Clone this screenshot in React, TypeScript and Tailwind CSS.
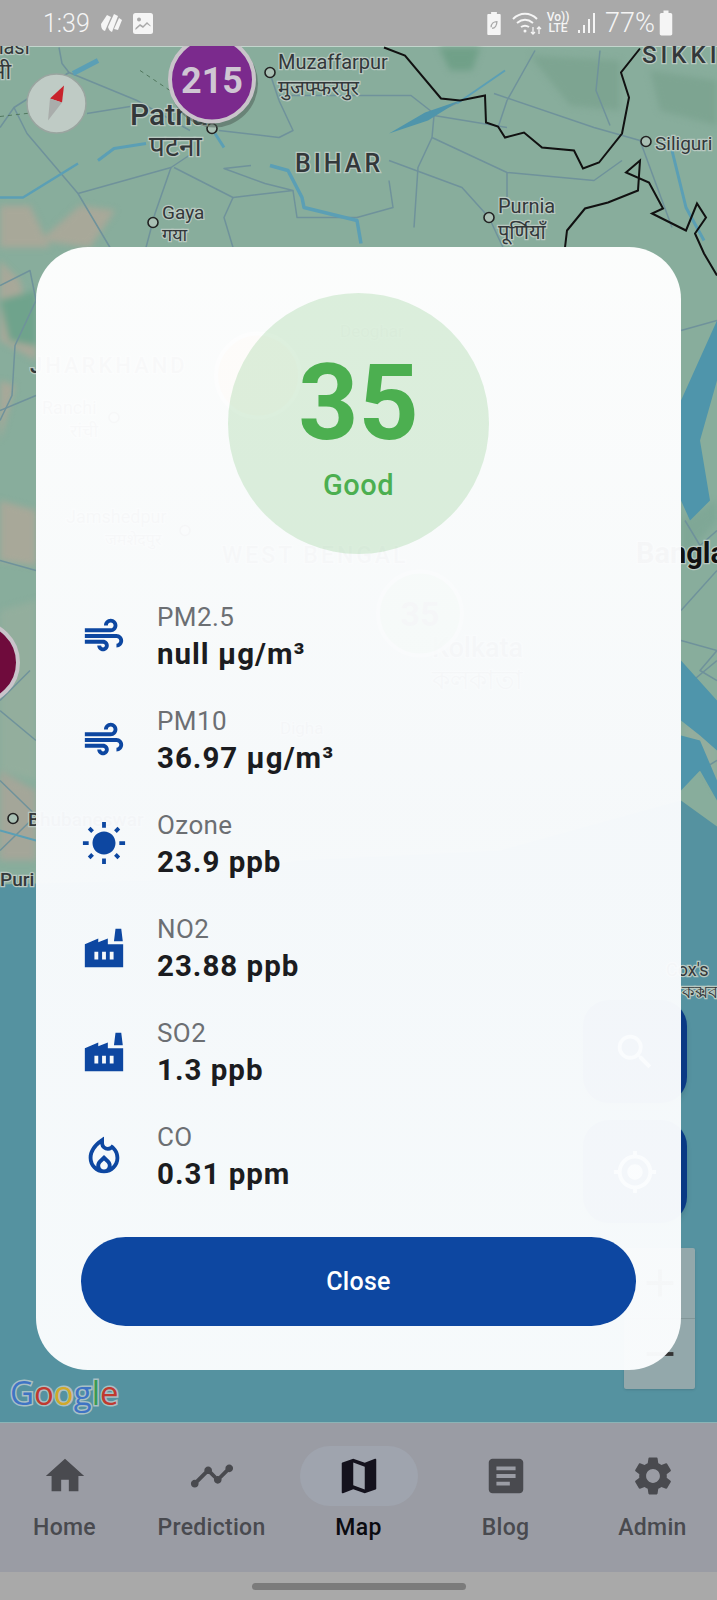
import { ReactNode } from "react";
import {
  MdAir,
  MdWbSunny,
  MdFactory,
  MdOutlineLocalFireDepartment,
  MdHome,
  MdTimeline,
  MdMap,
  MdArticle,
  MdSettings,
  MdSearch,
  MdGpsFixed,
  MdBatteryStd,
  MdAdd,
  MdRemove,
} from "react-icons/md";

const pollutants: { icon: ReactNode; label: string; value: string }[] = [
  { icon: <MdAir size={46} />, label: "PM2.5", value: "null µg/m³" },
  { icon: <MdAir size={46} />, label: "PM10", value: "36.97 µg/m³" },
  { icon: <MdWbSunny size={46} />, label: "Ozone", value: "23.9 ppb" },
  { icon: <MdFactory size={46} />, label: "NO2", value: "23.88 ppb" },
  { icon: <MdFactory size={46} />, label: "SO2", value: "1.3 ppb" },
  { icon: <MdOutlineLocalFireDepartment size={46} />, label: "CO", value: "0.31 ppm" },
];

const navItems = [
  { icon: <MdHome size={46} />, label: "Home" },
  { icon: <MdTimeline size={46} />, label: "Prediction" },
  { icon: <MdMap size={46} />, label: "Map", active: true },
  { icon: <MdArticle size={46} />, label: "Blog" },
  { icon: <MdSettings size={46} />, label: "Admin" },
];

const roads = [
  "M59 47 L62 63 L69 72 L14 107 L0 127",
  "M14 107 L27 133 L78 193 L110 247",
  "M69 72 L137 100 L190 130",
  "M87 113 L130 106",
  "M171 167 L155 213 L146 247",
  "M78 193 L171 167 L192 153",
  "M174 167 L233 197 L293 190 L265 183 L224 168 L251 165",
  "M233 197 L224 217 L233 247",
  "M293 190 L297 217 L357 217 L393 207 L389 180",
  "M219 130 L279 137 L293 130 L279 100",
  "M270 73 L279 100",
  "M279 95 L411 95 L434 113 L462 100",
  "M434 115 L507 127",
  "M434 115 L432 137 L507 172 L594 180 L622 160",
  "M432 137 L418 167 L414 227",
  "M389 160 L462 187 L489 217",
  "M507 172 L507 200",
  "M535 50 L507 100 L498 127",
  "M494 93 L594 127 L640 140",
  "M640 140 L672 227",
  "M489 217 L503 247",
  "M600 50 L596 90 L610 125",
  "M0 285 L30 270 L36 300",
  "M36 300 L15 345 L12 395 L0 420",
  "M0 410 L36 395",
  "M0 700 L30 670",
  "M0 710 L36 740",
  "M0 780 L36 815 L0 850",
  "M0 560 L36 570",
  "M681 330 L717 320",
  "M685 520 L700 545 L717 530",
  "M681 610 L717 570",
  "M681 640 L717 650 L700 670 L717 680",
  "M681 690 L717 660",
  "M681 750 L700 770 L717 760",
];

const rivers = [
  { d: "M270 165 L288 170 L302 197 L304 207 L357 220 L361 243", w: 3.5 },
  { d: "M98 160 L114 148 L146 143", w: 3 },
  { d: "M0 197 L23 197 L78 163", w: 2.5 },
  { d: "M73 73 L98 60", w: 5 },
  { d: "M215 133 L224 147", w: 3 },
  { d: "M457 103 L505 70", w: 2 },
  { d: "M672 150 L686 207 L704 240", w: 3 },
  { d: "M0 830 L36 840", w: 2 },
];

const riverFills = [
  "M389 133 L425 112 L460 100 L428 120 Z",
  "M681 400 L717 320 L717 380 L700 440 L710 500 L690 520 L681 500 Z",
  "M681 660 L717 700 L717 750 L700 735 L681 720 Z",
  "M681 735 L700 740 L717 780 L717 800 L700 770 L681 790 Z",
];

const patches = [
  { d: "M0 260 L20 280 L36 340 L36 360 L0 340 Z", fill: "#a8a899" },
  { d: "M0 380 L15 385 L0 440 Z", fill: "#a8a899" },
  { d: "M0 500 L36 510 L36 565 L0 560 Z", fill: "#a8a899" },
  { d: "M0 610 L36 600 L36 780 L0 770 Z", fill: "#93ae9d" },
  { d: "M0 770 L36 790 L36 860 L0 860 Z", fill: "#a4a699" },
  { d: "M0 205 L30 205 L50 247 L0 247 Z", fill: "#a8a899" },
  { d: "M40 240 L80 205 L115 210 L90 247 Z", fill: "#a8a899" },
  { d: "M439 47 L480 47 L472 70 L450 70 Z", fill: "#70a088" },
  { d: "M530 55 L620 60 L620 110 L570 105 Z", fill: "#7da491" },
  { d: "M650 70 L717 80 L717 125 L660 110 Z", fill: "#7da491" },
  { d: "M0 300 L36 290 L36 345 L10 340 Z", fill: "#6fa38c" },
  { d: "M681 520 L717 500 L717 520 L681 560 Z", fill: "#7fa796" },
  { d: "M681 730 L717 700 L717 790 Z", fill: "#93ad9d" },
];

const labels: { x: number; y: number; text: string; size?: number; weight?: number; spacing?: number; fill?: string }[] = [
  { x: -48, y: 53, text: "Varanasi", size: 20 },
  { x: -58, y: 78, text: "वाराणसी", size: 22 },
  { x: 278, y: 68, text: "Muzaffarpur", size: 20 },
  { x: 278, y: 94, text: "मुजफ्फरपुर", size: 20 },
  { x: 130, y: 124, text: "Patna", size: 30, weight: 500 },
  { x: 149, y: 155, text: "पटना", size: 28 },
  { x: 295, y: 171, text: "BIHAR", size: 25, weight: 500, spacing: 3 },
  { x: 162, y: 218, text: "Gaya", size: 19 },
  { x: 162, y: 240, text: "गया", size: 18 },
  { x: 498, y: 212, text: "Purnia", size: 20 },
  { x: 498, y: 238, text: "पूर्णियाँ", size: 20 },
  { x: 655, y: 149, text: "Siliguri", size: 19 },
  { x: 642, y: 62, text: "SIKKIM", size: 24, weight: 500, spacing: 4 },
  { x: 30, y: 372, text: "JHARKHAND", size: 22, weight: 500, spacing: 3 },
  { x: 42, y: 413, text: "Ranchi", size: 18 },
  { x: 70, y: 436, text: "रांची", size: 18 },
  { x: 66, y: 522, text: "Jamshedpur", size: 18 },
  { x: 105, y: 544, text: "जमशेदपुर", size: 16 },
  { x: 222, y: 562, text: "WEST BENGAL", size: 23, weight: 500, spacing: 3 },
  { x: 340, y: 336, text: "Deoghar", size: 17 },
  { x: 636, y: 562, text: "Bangladesh", size: 29, weight: 700, fill: "#111" },
  { x: 432, y: 656, text: "Kolkata", size: 27, weight: 500 },
  { x: 432, y: 688, text: "কলকাতা", size: 26 },
  { x: 280, y: 733, text: "Digha", size: 17 },
  { x: 28, y: 825, text: "Bhubaneswar", size: 19, weight: 500 },
  { x: 0, y: 885, text: "Puri", size: 19, weight: 500 },
  { x: 666, y: 975, text: "Cox's", size: 18 },
  { x: 682, y: 997, text: "কক্সবাজার", size: 18 },
];

const towns = [
  [270, 72],
  [212, 128],
  [153, 222],
  [489, 217],
  [646, 141],
  [114, 417],
  [185, 530],
  [13, 818],
];

function MapCanvas() {
  return (
    <svg viewBox="0 46 717 1376" className="absolute inset-0 h-full w-full font-['Roboto',sans-serif]">
      <rect x="0" y="46" width="717" height="1376" fill="#88ad9c" />
      <g className="blur-[3px]">
        {patches.map((p, i) => (
          <path key={i} d={p.d} fill={p.fill} />
        ))}
      </g>
      {roads.map((d, i) => (
        <path key={i} d={d} fill="none" stroke="#6f929b" strokeWidth="1.5" strokeLinejoin="round" />
      ))}
      <path d="M0 884 L150 880 L300 860 L500 850 L681 800 L717 826 L717 1422 L0 1422 Z" fill="#5592a0" />
      {riverFills.map((d, i) => (
        <path key={i} d={d} fill="#4f95ab" />
      ))}
      {rivers.map((r, i) => (
        <path key={i} d={r.d} fill="none" stroke="#5b9fb5" strokeWidth={r.w} strokeLinejoin="round" />
      ))}
      <path
        d="M384 47 L405 55 L441 98 L460 100 L485 95 L486 122 L498 126 L505 137 L524 132 L542 147 L574 150 L583 168 L599 162 L622 133 L629 97 L621 72 L640 48"
        fill="none"
        stroke="#111"
        strokeWidth="2"
      />
      <path
        d="M565 247 L567 230 L585 208 L608 202 L638 190 L640 160 L626 172 L649 182 L663 208 L652 213 L672 223 L686 230 L697 203 L706 217 L695 233 L704 253 L717 275"
        fill="none"
        stroke="#111"
        strokeWidth="2"
      />
      <path d="M0 116 L35 112 M140 70 L170 90 L220 100" fill="none" stroke="#52785f" strokeWidth="1" strokeDasharray="4 4" />
      {towns.map(([x, y], i) => (
        <circle key={i} cx={x} cy={y} r="5" fill="#a9c0b4" stroke="#222" strokeWidth="1.6" />
      ))}
      {labels.map((l) => (
        <text
          key={l.text + l.x}
          x={l.x}
          y={l.y}
          fontSize={l.size}
          fontWeight={l.weight ?? 400}
          letterSpacing={l.spacing}
          fill={l.fill ?? "#33383a"}
          stroke="#b9c9c1"
          strokeWidth="2.5"
          paintOrder="stroke"
          fontFamily="Roboto, 'Noto Sans', sans-serif"
        >
          {l.text}
        </text>
      ))}

      {/* markers */}
      <g>
        <circle cx="214" cy="83" r="44" fill="#4a5a52" opacity="0.5" />
        <circle cx="212" cy="79" r="42" fill="#7b2a8d" stroke="#c9c4ca" strokeWidth="4" />
        <text x="212" y="92" textAnchor="middle" fontSize="36" fontWeight="700" fill="#cfc6d3">
          215
        </text>
      </g>
      <circle cx="-22" cy="662" r="40" fill="#6f0b3c" stroke="#c9c4ca" strokeWidth="4" />
      <circle cx="258" cy="375" r="42" fill="#e0a050" stroke="#d8d8d0" strokeWidth="4" />
      <circle cx="420" cy="613" r="42" fill="#4caf50" stroke="#d8d8d0" strokeWidth="4" opacity="0.8" />
      <text x="420" y="625" textAnchor="middle" fontSize="34" fontWeight="700" fill="#333">
        35
      </text>

      {/* compass */}
      <circle cx="56.5" cy="103" r="29.5" fill="#bfcbc5" stroke="#9aa5a0" strokeWidth="1.5" />
      <path d="M64 85 L50 98 L62 102 Z" fill="#c8232c" />
      <path d="M50 98 L62 102 L48 120 Z" fill="#a9adab" />

      {/* google logo */}
      <text
        x="10"
        y="1404"
        fontSize="33"
        fontWeight="500"
        stroke="#a9c0c4"
        strokeWidth="3"
        paintOrder="stroke"
        fontFamily="'Open Sans', sans-serif"
      >
        <tspan fill="#3f74c4">G</tspan>
        <tspan fill="#c0392f">o</tspan>
        <tspan fill="#d1a92a">o</tspan>
        <tspan fill="#3f74c4">g</tspan>
        <tspan fill="#3a9a52">l</tspan>
        <tspan fill="#c0392f">e</tspan>
      </text>
    </svg>
  );
}

function StatusBar() {
  return (
    <div className="flex h-[46px] shrink-0 items-center justify-between bg-[#a9a9a9] pl-[43px] pr-[40px] text-[#f5f5f5]">
      <div className="flex items-center">
        <span className="text-[25px] font-light leading-none">1:39</span>
        <svg viewBox="0 0 24 22" className="ml-[9px] h-[22px] w-[24px]" fill="#f5f5f5">
          <path d="M2 12 L8 3 L12 5 L6 19 Q2 18 2 12 Z M9 15 L15 2 L19 4 L13 20 Q10 19 9 15 Z M15 17 L20 6 L23 8 L19 18 Z" />
        </svg>
        <svg viewBox="0 0 20 21" className="ml-[10px] h-[21px] w-[20px]">
          <rect width="20" height="21" rx="2.5" fill="#f5f5f5" />
          <circle cx="6" cy="6.5" r="2" fill="#a9a9a9" />
          <path d="M2.5 15 L7 11 L10 13 L14 9 L17.5 12.5 L17.5 13.5 L14 11 L10 15 L7 13 L2.5 17 Z" fill="#a9a9a9" />
        </svg>
      </div>
      <div className="flex items-center">
        <svg viewBox="0 0 14 24" className="h-[23px] w-[14px]" fill="#f5f5f5">
          <path d="M4 0h6v2h3a1 1 0 0 1 1 1v20a1 1 0 0 1-1 1H1a1 1 0 0 1-1-1V3a1 1 0 0 1 1-1h3z" />
          <path d="M4 16c0-4 3-6 6-6 0 4-2 7-5 7" fill="none" stroke="#a9a9a9" strokeWidth="1.4" />
        </svg>
        <svg viewBox="0 0 30 24" className="ml-[11px] h-[24px] w-[30px]" fill="none" stroke="#f5f5f5" strokeWidth="2">
          <path d="M1 8c7-7 17-7 24 0M5 12c5-4 11-4 16 0M9 16c3-2 5-2 8 0" />
          <circle cx="13" cy="20" r="1.5" fill="#f5f5f5" stroke="none" />
          <path d="M21 16v7M27 23v-7M19 21l2 2 2-2M25 18l2-2 2 2" strokeWidth="1.3" />
        </svg>
        <div className="ml-[5px] flex w-[22px] flex-col items-center text-[12px] font-medium leading-[11px]">
          <span>Vo))</span>
          <span>LTE</span>
        </div>
        <svg viewBox="0 0 18 24" className="ml-[9px] h-[24px] w-[18px]" fill="#f5f5f5">
          <rect x="0" y="19" width="2" height="3" />
          <rect x="5" y="14" width="2" height="8" />
          <rect x="10" y="8" width="2" height="14" />
          <rect x="15" y="2" width="2" height="20" />
        </svg>
        <span className="ml-[9px] text-[27px] font-light leading-none">77%</span>
        <MdBatteryStd size={30} className="-mx-[4px]" />
      </div>
    </div>
  );
}

function ZoomControl() {
  return (
    <div className="absolute bottom-[34px] right-[22px] flex h-[141px] w-[71px] flex-col rounded-[2px] bg-[#93a8ab] text-[#333] shadow-sm">
      <div className="flex flex-1 items-center justify-center border-b border-[#829698]">
        <MdAdd size={46} />
      </div>
      <div className="flex flex-1 items-center justify-center">
        <MdRemove size={46} />
      </div>
    </div>
  );
}

function FloatingButtons() {
  return (
    <div className="absolute right-[30px] top-[954px] flex flex-col gap-[17px]">
      <div className="flex h-[103px] w-[104px] items-center justify-center rounded-[26px] bg-[#0a3a85] text-white shadow-md">
        <MdSearch size={46} />
      </div>
      <div className="flex h-[103px] w-[104px] items-center justify-center rounded-[26px] bg-[#0a3a85] text-white shadow-md">
        <MdGpsFixed size={46} />
      </div>
    </div>
  );
}

function AirQualityDialog() {
  return (
    <div className="absolute left-[36px] top-[201px] flex h-[1123px] w-[645px] flex-col items-center rounded-[52px] bg-linear-to-b from-white/[0.97] via-[#f9fbfd]/[0.97] to-[#fbfdfe]/[0.97] px-[45px] pt-[46px]">
      <div className="flex h-[261px] w-[261px] flex-col items-center rounded-full bg-[#4caf50]/[0.18] pt-[56px]">
        <div className="text-[105px] font-bold leading-[110px] text-[#4caf50]">35</div>
        <div className="mt-[9px] text-[29px] font-medium leading-[34px] tracking-[0.5px] text-[#4caf50]">Good</div>
      </div>
      <div className="mt-[40px] flex w-full flex-col gap-[20px]">
        {pollutants.map((p) => (
          <div key={p.label} className="flex h-[84px] items-center">
            <div className="flex w-[46px] items-center justify-center text-[#0d47a1]">{p.icon}</div>
            <div className="ml-[30px] flex flex-col">
              <span className="text-[26px] leading-[36px] tracking-[0.4px] text-[#6c6f73]">{p.label}</span>
              <span className="text-[29.5px] font-bold leading-[38px] tracking-[1px] text-[#1b1c20]">{p.value}</span>
            </div>
          </div>
        ))}
      </div>
      <button className="mt-[39px] flex h-[89px] w-[555px] shrink-0 items-center justify-center rounded-[45px] bg-[#0d47a1] text-[25px] font-medium tracking-[0.3px] text-white">
        Close
      </button>
    </div>
  );
}

function BottomNav() {
  return (
    <div className="-mx-[9px] flex h-[149px] shrink-0 bg-[#9a9ca4] px-0 pt-[23px]">
      {navItems.map((item) => (
        <div key={item.label} className="flex flex-1 flex-col items-center">
          <div
            className={
              item.active
                ? "flex h-[60px] w-[118px] items-center justify-center rounded-[30px] bg-[#9fa4ae] text-[#14121d]"
                : "flex h-[60px] w-[118px] items-center justify-center text-[#494a4f]"
            }
          >
            {item.icon}
          </div>
          <span
            className={
              item.active
                ? "mt-[6px] text-[23px] font-medium leading-[32px] tracking-[0.3px] text-[#0b0b10]"
                : "mt-[6px] text-[23px] font-medium leading-[32px] tracking-[0.3px] text-[#494a4f]"
            }
          >
            {item.label}
          </span>
        </div>
      ))}
    </div>
  );
}

export default function App() {
  return (
    <div className="flex h-[1600px] w-[717px] flex-col overflow-hidden font-['Roboto',sans-serif]">
      <StatusBar />
      <div className="relative flex-1 overflow-hidden">
        <MapCanvas />
        <ZoomControl />
        <FloatingButtons />
        <AirQualityDialog />
      </div>
      <BottomNav />
      <div className="flex h-[28px] shrink-0 items-center justify-center bg-[#a9a9a9]">
        <div className="h-[7px] w-[214px] rounded-full bg-[#7b7b7b]" />
      </div>
    </div>
  );
}
